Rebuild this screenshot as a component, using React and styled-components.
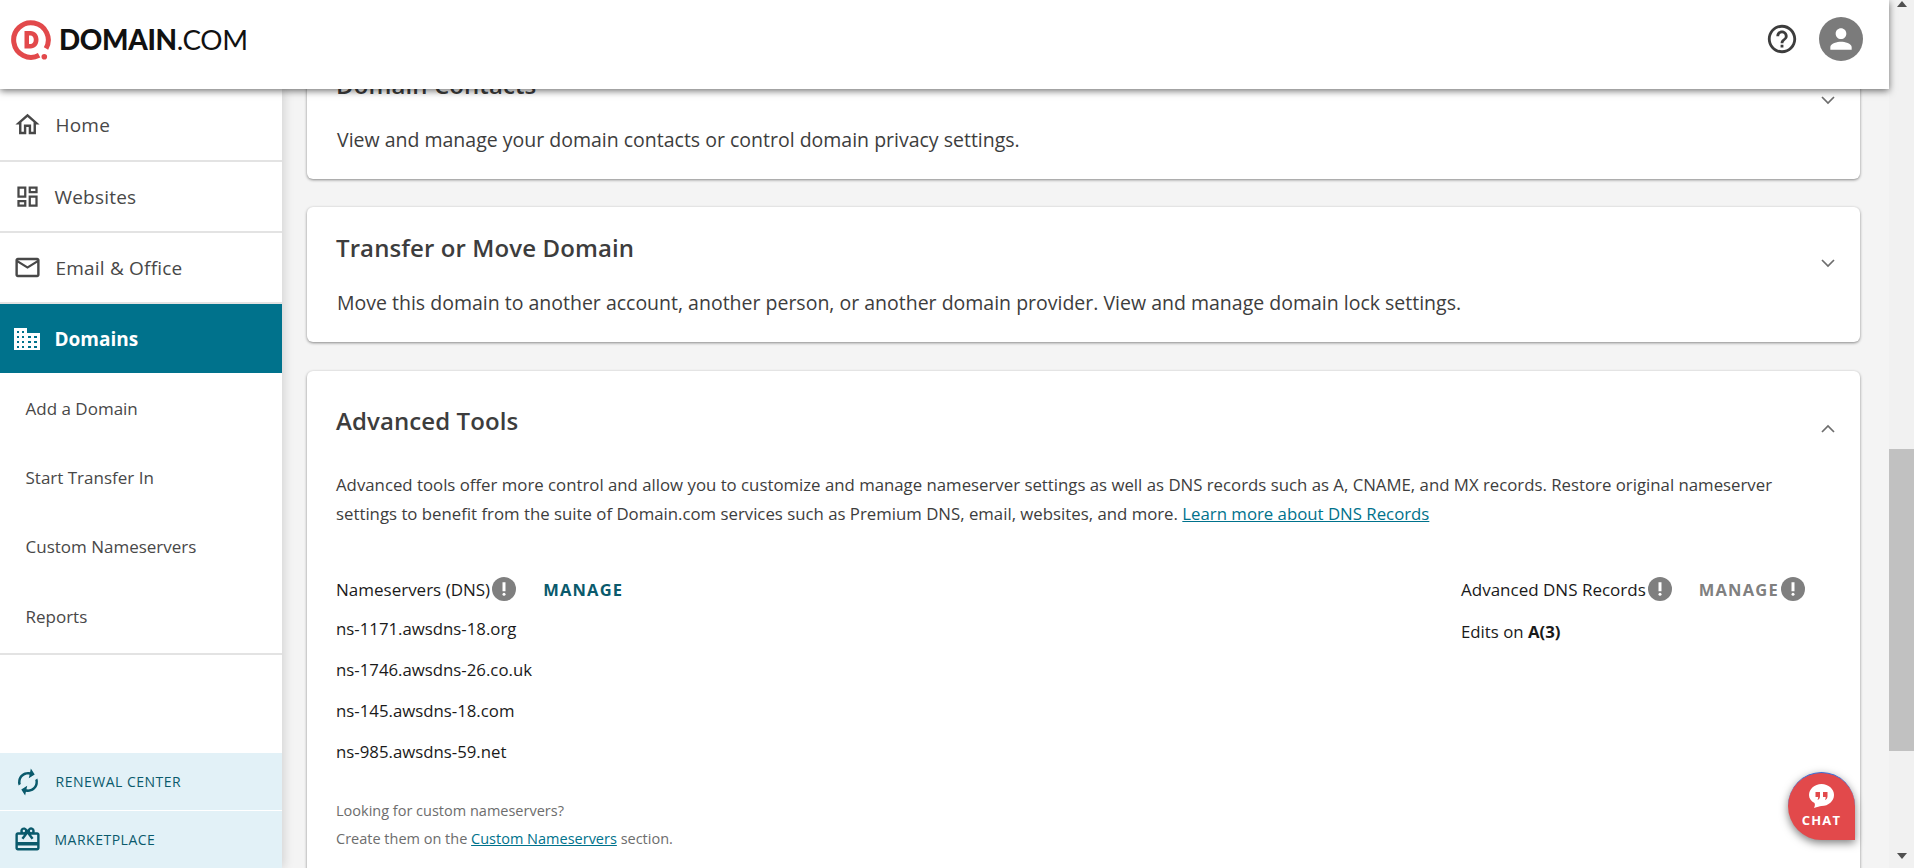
import React from 'react';
import styled, { createGlobalStyle } from 'styled-components';
import {
  MdOutlineHome,
  MdOutlineDashboard,
  MdMailOutline,
  MdSync,
  MdOutlineCardGiftcard,
  MdHelpOutline,
  MdPerson,
  MdPriorityHigh,
} from 'react-icons/md';

const GlobalStyle = createGlobalStyle`
  html, body {
    margin: 0;
    height: 100%;
    overflow: hidden;
  }
  body {
    font-family: "Open Sans", "Liberation Sans", sans-serif;
    color: #3d3d3d;
  }
`;

const Page = styled.div`
  display: flex;
  width: 1914px;
  height: 868px;
  overflow: hidden;
`;

const Column = styled.div`
  display: flex;
  flex-direction: column;
  flex: 0 0 1889px;
  height: 868px;
  position: relative;
`;

const Header = styled.header`
  display: flex;
  align-items: center;
  justify-content: space-between;
  flex: 0 0 89px;
  padding: 0 26px 0 10px;
  background: #fff;
  box-shadow: 0 2px 7px rgba(0, 0, 0, 0.55);
  position: relative;
  z-index: 3;
`;

const Logo = styled.div`
  display: flex;
  align-items: center;
  gap: 7px;
  margin-top: -7px;
`;

const LogoText = styled.span`
  font-family: Lato, "Open Sans", sans-serif;
  font-size: 27.8px;
  font-weight: 900;
  color: #111;
  letter-spacing: -0.3px;
  margin-top: -4px;
`;

const LogoLight = styled.span`
  font-weight: 400;
`;

const HeaderTools = styled.div`
  display: flex;
  align-items: center;
  gap: 20px;
  margin-top: -12px;
  color: #3d3d3d;
`;

const Avatar = styled.div`
  display: flex;
  align-items: center;
  justify-content: center;
  width: 44px;
  height: 44px;
  border-radius: 50%;
  background: #7b7b7b;
  color: #fff;
`;

const Body = styled.div`
  display: flex;
  flex: 1;
  min-height: 0;
`;

const Sidebar = styled.nav`
  display: flex;
  flex-direction: column;
  flex: 0 0 282px;
  background: #fff;
  box-shadow: 2px 0 10px rgba(0, 0, 0, 0.14);
  position: relative;
  z-index: 2;
`;

const IconSlot = styled.span`
  display: flex;
  align-items: center;
  justify-content: center;
  flex: 0 0 28px;
`;

const NavRow = styled.div`
  display: flex;
  align-items: center;
  gap: 13.5px;
  height: ${(p) => p.$height}px;
  padding-left: 13px;
  box-sizing: border-box;
  border-bottom: 2px solid #e3e3e3;
  font-size: 19px;
  letter-spacing: 0.2px;
  color: #484848;
  ${(p) =>
    p.$active &&
    `
    background: #00728c;
    color: #fff;
    font-weight: 700;
    letter-spacing: 0;
    border-bottom: 0;
  `}
`;

const SubNav = styled.div`
  display: flex;
  flex-direction: column;
  padding: 1px 0 2px;
  border-bottom: 2px solid #e3e3e3;
`;

const SubRow = styled.div`
  display: flex;
  align-items: center;
  height: 69.2px;
  padding-left: 25.5px;
  font-size: 17px;
  color: #484848;
`;

const SideFooter = styled.div`
  display: flex;
  flex-direction: column;
  gap: 1px;
  margin-top: auto;
`;

const PromoRow = styled.div`
  display: flex;
  align-items: center;
  gap: 12.5px;
  height: 57px;
  padding-left: 13px;
  background: #e2f1f7;
  color: #0a5a6c;
  font-size: 14px;
  letter-spacing: 0.5px;
`;

const FlippedSync = styled(MdSync)`
  transform: scaleX(-1) rotate(-12deg);
`;

const Main = styled.main`
  flex: 1;
  min-width: 0;
  display: flex;
  flex-direction: column;
  gap: 28px;
  padding: 0 29px 0 25px;
  background: #f4f4f4;
  overflow: hidden;
`;

const Card = styled.section`
  flex: none;
  position: relative;
  background: #fff;
  border-radius: 6px;
  box-shadow: 0 1px 3px rgba(0, 0, 0, 0.45);
  padding: ${(p) => p.$padding || '25px 29px 26px 29px'};
  margin-top: ${(p) => p.$offset || 0}px;
`;

const CardHead = styled.div`
  display: flex;
  align-items: center;
  justify-content: space-between;
  height: 32px;
  margin-right: -5px;
  color: #6d6d6d;
`;

const CardTitle = styled.h2`
  margin: 0;
  font-size: 24px;
  line-height: 32px;
  font-weight: 600;
  color: #3d3d3d;
  letter-spacing: 0.1px;
`;

const Chevron = styled.svg`
  width: 16px;
  height: 10px;
  margin-top: ${(p) => p.$shift}px;
  transform: ${(p) => (p.$open ? 'rotate(180deg)' : 'none')};
`;

const CardText = styled.p`
  margin: 0;
  padding: 26px 0 0 1px;
  font-size: 19.5px;
  line-height: 26px;
  color: #3d3d3d;
`;

const Intro = styled.p`
  margin: 0;
  padding-top: 33px;
  font-size: 16.8px;
  line-height: 29px;
  color: #3d3d3d;
`;

const Link = styled.a`
  color: #00728c;
  text-decoration: underline;
`;

const Columns = styled.div`
  display: flex;
  justify-content: space-between;
  padding-top: 46px;
`;

const DnsColumn = styled.div`
  display: flex;
  flex-direction: column;
  width: ${(p) => p.$width}px;
`;

const DnsHead = styled.div`
  display: flex;
  align-items: center;
  height: 30px;
  font-size: 17px;
  color: #1a1a1a;
`;

const Info = styled.span`
  display: inline-flex;
  align-items: center;
  justify-content: center;
  width: 24px;
  height: 24px;
  margin-left: 2px;
  border-radius: 50%;
  background: #7f7f7f;
  color: #fff;
`;

const Manage = styled.span`
  margin-left: 27px;
  font-size: 16.5px;
  font-weight: 700;
  letter-spacing: 1.2px;
  color: ${(p) => (p.$disabled ? '#808080' : '#0a5a6c')};
`;

const NsList = styled.div`
  display: flex;
  flex-direction: column;
  padding-top: ${(p) => p.$top}px;
`;

const NsRow = styled.div`
  height: 41px;
  line-height: 41px;
  font-size: 16.8px;
  color: #1a1a1a;
`;

const Note = styled.div`
  padding-top: 25px;
  font-size: 14.5px;
  line-height: 28px;
  color: #6d6d6d;
`;

const Scrollbar = styled.div`
  display: flex;
  flex-direction: column;
  align-items: center;
  flex: 0 0 25px;
  height: 868px;
  background: #f1f1f1;
`;

const ScrollArrow = styled.div`
  width: 0;
  height: 0;
  margin: ${(p) => (p.$down ? '0 0 9px' : '1px 0 0')};
  border-left: 5.5px solid transparent;
  border-right: 5.5px solid transparent;
  ${(p) => (p.$down ? 'border-top: 6px solid #505050;' : 'border-bottom: 6px solid #505050;')}
`;

const ScrollTrack = styled.div`
  flex: 1;
  align-self: stretch;
`;

const ScrollThumb = styled.div`
  height: 302px;
  margin-top: 442px;
  background: #c1c1c1;
`;

const ChatButton = styled.div`
  position: absolute;
  right: 34px;
  bottom: 28px;
  display: flex;
  flex-direction: column;
  align-items: center;
  width: 67px;
  height: 68px;
  padding-top: 10px;
  box-sizing: border-box;
  border-radius: 50% 50% 0 50%;
  background: #e2494b;
  border-top: 1px solid #3a6fd8;
  box-shadow: 0 3px 8px rgba(0, 0, 0, 0.5);
  color: #fff;
  z-index: 4;
`;

const ChatLabel = styled.span`
  margin-top: 3px;
  font-size: 13px;
  font-weight: 700;
  letter-spacing: 1.2px;
  line-height: 16px;
`;

const DomainLogo = () => (
  <svg width="42" height="44" viewBox="0 0 42 44">
    <path d="M29.100 36.300A17.300 17.300 0 1 1 36 29.600" fill="none" stroke="#e2494b" strokeWidth="5" />
    <circle cx="34.300" cy="37.700" r="2.800" fill="#e2494b" />
    <path
      fillRule="evenodd"
      fill="#e2494b"
      d="M14.500 12h6c4.800 0 8 3.700 8 8.800S25.300 29.500 20.500 29.500h-6zM19 16.500v8.500h1.500c2 0 3.300-1.800 3.300-4.200s-1.300-4.300-3.300-4.300z"
    />
  </svg>
);

const DomainsIcon = () => (
  <svg width="26" height="22" viewBox="0 0 26 22">
    <path fill="#fff" d="M0 0h13v5h13v17H0z" />
    <path
      fill="#00728c"
      d="M3 3h2v2H3zM8 3h2v2H8zM3 8h2v2H3zM8 8h2v2H8zM3 13h2v2H3zM8 13h2v2H8zM3 18h2v2H3zM8 18h2v2H8zM14 8h3v2h-3zM20 8h3v2h-3zM14 13h3v2h-3zM20 13h3v2h-3zM14 18h3v2h-3zM20 18h3v2h-3z"
    />
  </svg>
);

const ChatIcon = () => (
  <svg width="27" height="26" viewBox="0 0 27 26">
    <path fill="#fff" d="M13.500 1C20.500 1 26 6 26 12s-5.500 11-12.500 11c-2 0-4 1-7.500 2 1-2 1.200-3.500 0.500-5C3 18 1 15.500 1 12 1 6 6.500 1 13.500 1z" />
    <path fill="#e2494b" d="M7.500 9h4.500v4.500c0 1.500-1 3-2.500 3.500 .5-1 .7-1.800 .7-3H7.500zM15 9h4.500v4.500c0 1.500-1 3-2.500 3.500 .5-1 .7-1.800 .7-3H15z" />
  </svg>
);

const ChevronIcon = ({ shift, open }) => (
  <Chevron viewBox="0 0 16 10" $shift={shift} $open={open}>
    <path d="M2 2l6 6 6-6" fill="none" stroke="#6d6d6d" strokeWidth="1.700" />
  </Chevron>
);

const navItems = [
  { label: 'Home', icon: <MdOutlineHome size={29} />, height: 73 },
  { label: 'Websites', icon: <MdOutlineDashboard size={27} />, height: 71 },
  { label: 'Email & Office', icon: <MdMailOutline size={29} />, height: 71 },
  { label: 'Domains', icon: <DomainsIcon />, height: 69, active: true },
];

const subItems = ['Add a Domain', 'Start Transfer In', 'Custom Nameservers', 'Reports'];
const nameservers = ['ns-1171.awsdns-18.org', 'ns-1746.awsdns-26.co.uk', 'ns-145.awsdns-18.com', 'ns-985.awsdns-59.net'];

export default function App() {
  return (
    <Page>
      <GlobalStyle />
      <Column>
        <Header>
          <Logo>
            <DomainLogo />
            <LogoText>
              DOMAIN<LogoLight>.COM</LogoLight>
            </LogoText>
          </Logo>
          <HeaderTools>
            <MdHelpOutline size={34} />
            <Avatar>
              <MdPerson size={32} />
            </Avatar>
          </HeaderTools>
        </Header>
        <Body>
          <Sidebar>
            {navItems.map((item) => (
              <NavRow key={item.label} $active={item.active} $height={item.height}>
                <IconSlot>{item.icon}</IconSlot>
                {item.label}
              </NavRow>
            ))}
            <SubNav>
              {subItems.map((item) => (
                <SubRow key={item}>{item}</SubRow>
              ))}
            </SubNav>
            <SideFooter>
              <PromoRow>
                <IconSlot>
                  <FlippedSync size={30} />
                </IconSlot>
                RENEWAL CENTER
              </PromoRow>
              <PromoRow>
                <IconSlot>
                  <MdOutlineCardGiftcard size={29} />
                </IconSlot>
                MARKETPLACE
              </PromoRow>
            </SideFooter>
          </Sidebar>
          <Main>
            <Card $offset={-45}>
              <CardHead>
                <CardTitle>Domain Contacts</CardTitle>
                <ChevronIcon shift={30} />
              </CardHead>
              <CardText>View and manage your domain contacts or control domain privacy settings.</CardText>
            </Card>
            <Card>
              <CardHead>
                <CardTitle>Transfer or Move Domain</CardTitle>
                <ChevronIcon shift={30} />
              </CardHead>
              <CardText>
                Move this domain to another account, another person, or another domain provider. View and manage domain lock settings.
              </CardText>
            </Card>
            <Card $padding="34px 29px 24px 29px" $offset={1}>
              <CardHead>
                <CardTitle>Advanced Tools</CardTitle>
                <ChevronIcon shift={15} open />
              </CardHead>
              <Intro>
                Advanced tools offer more control and allow you to customize and manage nameserver settings as well as DNS records such as A, CNAME, and MX records. Restore original nameserver settings to benefit from the suite of Domain.com services such as Premium DNS, email, websites, and more. <Link>Learn more about DNS Records</Link>
              </Intro>
              <Columns>
                <DnsColumn $width={400}>
                  <DnsHead>
                    Nameservers (DNS)
                    <Info>
                      <MdPriorityHigh size={18} />
                    </Info>
                    <Manage>MANAGE</Manage>
                  </DnsHead>
                  <NsList $top={4}>
                    {nameservers.map((ns) => (
                      <NsRow key={ns}>{ns}</NsRow>
                    ))}
                  </NsList>
                  <Note>
                    Looking for custom nameservers?
                    <br />
                    Create them on the <Link>Custom Nameservers</Link> section.
                  </Note>
                </DnsColumn>
                <DnsColumn $width={370}>
                  <DnsHead>
                    Advanced DNS Records
                    <Info>
                      <MdPriorityHigh size={18} />
                    </Info>
                    <Manage $disabled>MANAGE</Manage>
                    <Info>
                      <MdPriorityHigh size={18} />
                    </Info>
                  </DnsHead>
                  <NsList $top={7}>
                    <NsRow>
                      Edits on <b>A(3)</b>
                    </NsRow>
                  </NsList>
                </DnsColumn>
              </Columns>
            </Card>
          </Main>
        </Body>
        <ChatButton>
          <ChatIcon />
          <ChatLabel>CHAT</ChatLabel>
        </ChatButton>
      </Column>
      <Scrollbar>
        <ScrollArrow />
        <ScrollTrack>
          <ScrollThumb />
        </ScrollTrack>
        <ScrollArrow $down />
      </Scrollbar>
    </Page>
  );
}
